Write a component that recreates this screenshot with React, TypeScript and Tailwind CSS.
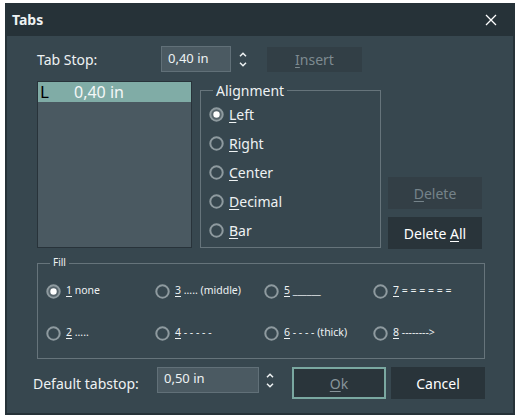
import { ReactNode } from 'react'

const font = { fontFamily: '"Noto Sans", "Open Sans", sans-serif' }

function Radio({ checked }: { checked?: boolean }) {
  return (
    <svg width="15" height="15" viewBox="0 0 15 15" className="shrink-0">
      <circle cx="7.5" cy="7.5" r="6.2" fill={checked ? '#56646b' : 'none'} stroke="#8e9a9f" strokeWidth="2" />
      {checked && <circle cx="7.5" cy="7.5" r="3.2" fill="#ffffff" />}
    </svg>
  )
}

function Spinner() {
  return (
    <div className="w-[12px] flex flex-col items-center gap-[5px]">
      <svg width="8" height="5" viewBox="0 0 8 5">
        <polyline points="1,4.2 4,1.2 7,4.2" fill="none" stroke="#eef2f3" strokeWidth="1.5" />
      </svg>
      <svg width="8" height="5" viewBox="0 0 8 5">
        <polyline points="1,0.8 4,3.8 7,0.8" fill="none" stroke="#eef2f3" strokeWidth="1.5" />
      </svg>
    </div>
  )
}

function Key({ children }: { children: ReactNode }) {
  return <span className="underline underline-offset-2">{children}</span>
}

const alignments: { key: string; rest: string; checked?: boolean }[] = [
  { key: 'L', rest: 'eft', checked: true },
  { key: 'R', rest: 'ight' },
  { key: 'C', rest: 'enter' },
  { key: 'D', rest: 'ecimal' },
  { key: 'B', rest: 'ar' },
]

const fills: { key: string; rest: string; checked?: boolean }[] = [
  { key: '1', rest: ' none', checked: true },
  { key: '3', rest: ' ..... (middle)' },
  { key: '5', rest: ' ______' },
  { key: '7', rest: ' = = = = = =' },
  { key: '2', rest: ' .....' },
  { key: '4', rest: ' - - - - -' },
  { key: '6', rest: ' - - - - (thick)' },
  { key: '8', rest: ' -------->' },
]

export default function App() {
  return (
    <div className="w-[519px] h-[418px] bg-white pl-[5px] pt-[3px]" style={font}>
      <div className="w-[510px] h-[412px] bg-[#263238] px-[2px] pb-[2px] flex flex-col text-[#eef2f3]">
        {/* Title bar */}
        <div className="h-[33px] flex items-center justify-between pl-[5px] pr-[16px]">
          <span className="text-[14px] font-bold">Tabs</span>
          <svg width="12" height="12" viewBox="0 0 12 12">
            <path d="M1 1 L11 11 M11 1 L1 11" stroke="#ffffff" strokeWidth="1.3" />
          </svg>
        </div>

        {/* Body */}
        <div className="flex-1 bg-[#37474f] pl-[30px] pt-[10px]">
          {/* Tab stop row */}
          <div className="flex items-center h-[26px]">
            <span className="w-[124px] text-[14px]">Tab Stop:</span>
            <div className="w-[70px] h-[26px] bg-[#4b5a62] border border-[#617078] flex items-center pl-[6px] text-[13px]">
              0,40 in
            </div>
            <div className="ml-[6px]">
              <Spinner />
            </div>
            <div className="ml-[18px] w-[95px] h-[25px] bg-[#323f46] flex items-center justify-center text-[14px] text-[#7e8b91]">
              <Key>I</Key>nsert
            </div>
          </div>

          {/* List, alignment, buttons */}
          <div className="mt-[9px] flex">
            <div className="w-[155px] h-[167px] bg-[#4a5961] border border-[#28333a]">
              <div className="h-[20px] bg-[#80aca6] flex items-center">
                <span className="text-[17px] text-black pl-[2px] w-[36px]">L</span>
                <span className="text-[16px] text-[#f4f7f7]">0,40 in</span>
              </div>
            </div>

            <div className="ml-[8px] mt-[9px] w-[181px] h-[158px] border border-[#66747b] relative pl-[8px] pt-[9px]">
              <span className="absolute -top-[11px] left-[12px] px-[3px] bg-[#37474f] text-[14px]">Alignment</span>
              {alignments.map((a) => (
                <div key={a.key} className="h-[29px] flex items-center gap-[5px] text-[14px]">
                  <Radio checked={a.checked} />
                  <span>
                    <Key>{a.key}</Key>
                    {a.rest}
                  </span>
                </div>
              ))}
            </div>

            <div className="ml-[7px] w-[94px] h-[168px] flex flex-col justify-end gap-[8px]">
              <div className="h-[32px] bg-[#333f46] flex items-center justify-center text-[14px] text-[#75838a]">
                <Key>D</Key>elete
              </div>
              <div className="h-[32px] bg-[#29343a] flex items-center justify-center text-[14px] text-white">
                <span>
                  Delete <Key>A</Key>ll
                </span>
              </div>
            </div>
          </div>

          {/* Fill group */}
          <div className="mt-[14px] w-[448px] h-[96px] border border-[#66747b] relative pl-[8px] pt-[6px]">
            <span className="absolute -top-[9px] left-[12px] px-[3px] bg-[#37474f] text-[10px]">Fill</span>
            <div className="grid grid-cols-[109px_109px_109px_109px]">
              {fills.map((f) => (
                <div key={f.key} className="h-[42px] flex items-center gap-[5px] text-[10.5px] whitespace-pre">
                  <Radio checked={f.checked} />
                  <span>
                    <Key>{f.key}</Key>
                    {f.rest}
                  </span>
                </div>
              ))}
            </div>
          </div>

          {/* Default tabstop row */}
          <div className="mt-[8px] -ml-[4px] flex items-start">
            <span className="w-[124px] h-[32px] flex items-center text-[14px]">Default tabstop:</span>
            <div className="w-[102px] h-[26px] bg-[#4b5a62] border border-[#617078] flex items-start pl-[6px] pt-[1px] text-[13px]">
              0,50 in
            </div>
            <div className="ml-[5px] h-[26px] flex items-center">
              <Spinner />
            </div>
            <div className="ml-[16px] w-[94px] h-[32px] bg-[#2a353b] border-2 border-[#7aa8a1] flex items-center justify-center text-[14px] text-[#87949a]">
              <span>
                <Key>O</Key>k
              </span>
            </div>
            <div className="ml-[5px] w-[94px] h-[32px] bg-[#29343a] flex items-center justify-center text-[14px] text-white">
              Cancel
            </div>
          </div>
        </div>
      </div>
    </div>
  )
}
